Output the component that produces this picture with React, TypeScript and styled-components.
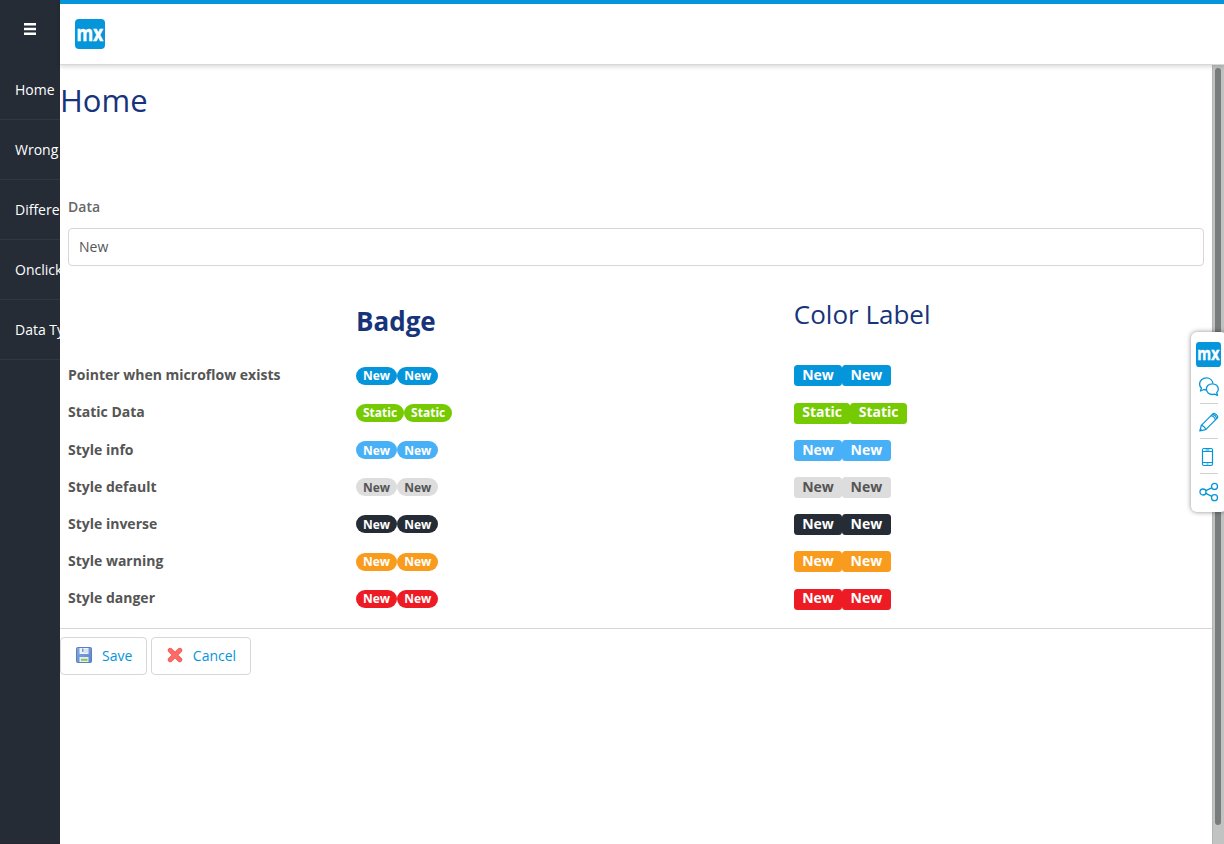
import React from 'react';
import styled, { createGlobalStyle } from 'styled-components';

const GlobalStyle = createGlobalStyle`
  * { box-sizing: border-box; }
  html, body { margin: 0; height: 100%; overflow: hidden; }
  body {
    font-family: 'Open Sans', sans-serif;
    font-size: 14px;
    line-height: 20px;
    color: #555;
    background: #fff;
  }
`;

const Page = styled.div`
  display: flex;
  width: 100%;
  height: 844px;
  overflow: hidden;
`;

const Sidebar = styled.nav`
  flex: 0 0 60px;
  background: #252c36;
  border-bottom: 1px solid #272631;
  overflow: hidden;
`;

const Toggle = styled.button`
  display: flex;
  align-items: center;
  justify-content: center;
  width: 60px;
  height: 60px;
  padding: 0 0 2px;
  border: 0;
  background: transparent;
`;

const NavItem = styled.a`
  display: block;
  height: 60px;
  padding: 0 0 0 15px;
  border-bottom: 1px solid #303844;
  line-height: 60px;
  color: #fff;
  white-space: nowrap;
  overflow: hidden;
`;

const Main = styled.main`
  display: flex;
  flex-direction: column;
  flex: 1;
  min-width: 0;
`;

const Topbar = styled.header`
  position: relative;
  flex: 0 0 65px;
  padding: 15px;
  border-top: 4px solid #0595db;
  border-bottom: 1px solid #d7d7d7;
  background: #fff;
  box-shadow: 0 2px 4px rgba(0, 0, 0, 0.14);
`;

const Body = styled.div`
  display: flex;
  flex: 1;
  min-height: 0;
`;

const Content = styled.div`
  flex: 1;
  min-width: 0;
`;

const ScrollTrack = styled.div`
  flex: 0 0 12px;
  padding: 3px 3px 19px 2px;
  background: #c1c3c3;
  border-left: 1px solid #b3b5b5;
`;

const ScrollThumb = styled.div`
  height: 100%;
  border-radius: 3px;
  background: #787c7d;
`;

const PageTitle = styled.h1`
  margin: 13px 0 0;
  font-size: 31px;
  font-weight: 400;
  line-height: 44px;
  color: #17347b;
`;

const Field = styled.label`
  display: block;
  margin: 75px 8px 0;
`;

const FieldName = styled.span`
  display: block;
  font-weight: 600;
  color: #666;
`;

const TextInput = styled.input`
  display: block;
  width: 100%;
  height: 38px;
  margin-top: 11px;
  padding: 0 10px 2px;
  border: 1px solid #d7d7d7;
  border-radius: 4px;
  font: inherit;
  color: #555;
  background: #fff;
`;

const StyleGrid = styled.div`
  display: grid;
  grid-template-columns: 288px 437.8px 1fr;
  grid-template-rows: 91.3px repeat(7, 37.19px);
  padding: 0 8px;
`;

const BadgeHeading = styled.h3`
  grid-column: 2;
  margin: 38px 0 0;
  font-size: 26px;
  font-weight: 700;
  line-height: 34px;
  color: #17347b;
`;

const LabelHeading = styled.h3`
  margin: 31px 0 0;
  font-size: 26px;
  font-weight: 400;
  line-height: 34px;
  color: #17347b;
`;

const RowName = styled.div`
  padding-top: 8px;
  font-weight: 700;
`;

const Cell = styled.div`
  display: flex;
  align-items: flex-start;
`;

type Tone = { bg: string; fg?: string };

const Badge = styled.span<{ $tone: Tone }>`
  height: 18px;
  margin-top: 9.4px;
  padding: 3.55px 7px 2px;
  border-radius: 10px;
  font-size: 12px;
  font-weight: 700;
  line-height: 12px;
  color: ${(p) => p.$tone.fg ?? '#fff'};
  background: ${(p) => p.$tone.bg};
`;

const ColorLabel = styled.span<{ $tone: Tone }>`
  height: 21px;
  margin-top: 8.17px;
  padding: 2.7px 8.4px 4.2px;
  border-radius: 3.5px;
  font-weight: 700;
  line-height: 14px;
  color: ${(p) => p.$tone.fg ?? '#fff'};
  background: ${(p) => p.$tone.bg};
`;

const Footer = styled.div`
  display: flex;
  gap: 4px;
  margin-top: 10.4px;
  padding-top: 8px;
  border-top: 1px solid #d7d7d7;
`;

const Button = styled.button`
  display: flex;
  align-items: center;
  height: 38px;
  padding: 0 13.5px 0 15px;
  gap: 10px;
  border: 1px solid #d7d7d7;
  border-radius: 4px;
  font: inherit;
  color: #0595db;
  background: #fff;

  svg {
    margin-bottom: 2px;
  }
`;

const Dock = styled.aside`
  position: absolute;
  top: 332px;
  left: 1191px;
  display: flex;
  flex-direction: column;
  align-items: center;
  width: 36px;
  height: 180px;
  padding-top: 10px;
  border-radius: 6px;
  background: #fff;
  box-shadow: 0 0 5px rgba(0, 0, 0, 0.45);
`;

const DockItem = styled.div<{ $line?: boolean }>`
  display: flex;
  align-items: center;
  justify-content: center;
  flex: 0 0 35px;
  width: 18px;
  padding-top: ${(p) => (p.$line ? '2px' : '0')};
  border-bottom: ${(p) => (p.$line ? '1px solid #d0d0d0' : '0')};

  svg {
    flex: none;
  }
`;

const DockLogo = styled.div`
  flex: 0 0 27px;
  height: 27px;
  margin-right: 1px;
`;

const Logo = ({ size }: { size: number }) => (
  <svg width={size} height={size} viewBox="0 0 30 30" display="block">
    <rect width="30" height="30" rx="4" fill="#0595db" />
    <text
      x="1.6"
      y="21.6"
      textLength="26.4"
      lengthAdjust="spacingAndGlyphs"
      fontFamily="Open Sans"
      fontSize="22"
      fontWeight="700"
      fill="#fff"
      stroke="#fff"
      strokeWidth="0.6"
    >
      mx
    </text>
  </svg>
);

const MenuIcon = () => (
  <svg width="12" height="12" viewBox="0 0 12 12" fill="#fff">
    <path d="M0 0h12v2.500H0zM0 4.800h12v2.500H0zM0 9.500h12V12H0z" />
  </svg>
);

const SaveIcon = () => (
  <svg width="16" height="16" viewBox="0 0 16 16">
    <defs>
      <linearGradient id="disk" x1="0" y1="0" x2="1" y2="1">
        <stop offset="0" stopColor="#87a8df" />
        <stop offset="1" stopColor="#5c83cb" />
      </linearGradient>
    </defs>
    <rect x=".5" y=".5" width="15" height="15" rx="1" fill="url(#disk)" stroke="#5d7fc0" />
    <path d="M3.500 1h9v6h-9z" fill="#edf3fb" />
    <path d="M6 1.500h1.500V5H6z" fill="#7899cf" />
    <path d="M8 2h4v4H8z" fill="#d8e4f5" />
    <path d="M3.500 10h9v5h-9z" fill="#e6edf5" />
    <path d="M5 11.800h6.500v2H5z" fill="#84cb4c" />
  </svg>
);

const CancelIcon = () => (
  <svg width="16" height="16" viewBox="0 0 16 16">
    <path d="M3.200 3.200 12.800 12.800M12.800 3.200 3.200 12.800" stroke="#f15c57" strokeWidth="4.800" strokeLinecap="round" />
    <path d="M3.200 3.200 12.800 12.800M12.800 3.200 3.200 12.800" stroke="#ff6b66" strokeWidth="3" strokeLinecap="round" />
  </svg>
);

const ChatIcon = () => (
  <svg width="20" height="20" viewBox="0 0 20 20" fill="none" stroke="#0595db" strokeWidth="1.300" strokeLinejoin="round">
    <path d="M7.500 12.700c-1 .1-1.800 0-2.600-.2L1.500 14l.9-3C1.200 9.900.6 8.600.6 7.100.6 3.600 3.600.9 7.300.9c3.500 0 6.200 2.300 6.600 5.400" />
    <path d="M13.300 6.800c3.400 0 6 2.300 6 5.300 0 1.600-.7 2.800-1.600 3.700l.8 2.600-2.900-1.200c-.7.2-1.500.3-2.300.3-3.300 0-5.900-2.300-5.900-5.400s2.600-5.300 5.900-5.300Z" />
  </svg>
);

const PencilIcon = () => (
  <svg width="20" height="20" viewBox="0 0 20 20" fill="none" stroke="#0595db" strokeWidth="1.200" strokeLinejoin="round">
    <path d="M.8 19 2.300 13.300 13.800 1.800c1.800-1.800 6.200 2.600 4.400 4.400L6.700 17.700Z" />
    <path d="M2.300 13.300c2 .2 4.200 2.400 4.400 4.400M12 3.600c2 .3 4.100 2.400 4.400 4.400M13.300 2.400c2 .3 4 2.300 4.300 4.300M1.300 17l1.700 1.700" />
  </svg>
);

const PhoneIcon = () => (
  <svg width="20" height="20" viewBox="0 0 20 20" fill="none" stroke="#0595db" strokeWidth="1.200">
    <rect x="3.500" y="1.500" width="10" height="17" rx="1.500" />
    <path d="M3.500 4.500h10M3.500 15.500h10M6.500 3h4M7.500 17h2" />
  </svg>
);

const ShareIcon = () => (
  <svg width="20" height="20" viewBox="0 0 20 20" fill="none" stroke="#0595db" strokeWidth="1.300">
    <circle cx="4" cy="10" r="3" />
    <circle cx="15.500" cy="4.400" r="3" />
    <circle cx="15.500" cy="15.700" r="3" />
    <path d="m6.800 8.700 6-2.900M6.800 11.300l6 3" />
  </svg>
);

const menu = ['Home', 'Wrong', 'Different', 'Onclick', 'Data Types'];

const rows: { name: string; text: string; tone: Tone }[] = [
  { name: 'Pointer when microflow exists', text: 'New', tone: { bg: '#0595db' } },
  { name: 'Static Data', text: 'Static', tone: { bg: '#76ca02' } },
  { name: 'Style info', text: 'New', tone: { bg: '#48b0f7' } },
  { name: 'Style default', text: 'New', tone: { bg: '#ddd', fg: '#555' } },
  { name: 'Style inverse', text: 'New', tone: { bg: '#252c36' } },
  { name: 'Style warning', text: 'New', tone: { bg: '#f99b1d' } },
  { name: 'Style danger', text: 'New', tone: { bg: '#ed1c24' } },
];

export default function App() {
  return (
    <>
      <GlobalStyle />
      <Page>
        <Sidebar>
          <Toggle aria-label="Toggle menu"><MenuIcon /></Toggle>
          {menu.map((item) => <NavItem key={item}>{item}</NavItem>)}
        </Sidebar>
        <Main>
          <Topbar><Logo size={30} /></Topbar>
          <Body>
            <Content>
              <PageTitle>Home</PageTitle>
              <Field>
                <FieldName>Data</FieldName>
                <TextInput defaultValue="New" />
              </Field>
              <StyleGrid>
                <BadgeHeading>Badge</BadgeHeading>
                <LabelHeading>Color Label</LabelHeading>
                {rows.map(({ name, text, tone }) => (
                  <React.Fragment key={name}>
                    <RowName>{name}</RowName>
                    <Cell>
                      <Badge $tone={tone}>{text}</Badge>
                      <Badge $tone={tone}>{text}</Badge>
                    </Cell>
                    <Cell>
                      <ColorLabel $tone={tone}>{text}</ColorLabel>
                      <ColorLabel $tone={tone}>{text}</ColorLabel>
                    </Cell>
                  </React.Fragment>
                ))}
              </StyleGrid>
              <Footer>
                <Button><SaveIcon />Save</Button>
                <Button><CancelIcon />Cancel</Button>
              </Footer>
            </Content>
            <ScrollTrack><ScrollThumb /></ScrollTrack>
          </Body>
        </Main>
      </Page>
      <Dock>
        <DockLogo><Logo size={25} /></DockLogo>
        <DockItem $line><ChatIcon /></DockItem>
        <DockItem $line><PencilIcon /></DockItem>
        <DockItem $line><PhoneIcon /></DockItem>
        <DockItem><ShareIcon /></DockItem>
      </Dock>
    </>
  );
}
